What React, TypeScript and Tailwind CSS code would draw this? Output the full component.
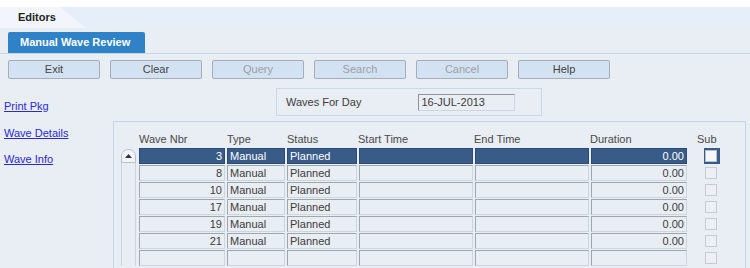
import React from 'react'

const ROWS = [
  { nbr: '3', type: 'Manual', status: 'Planned', dur: '0.00' },
  { nbr: '8', type: 'Manual', status: 'Planned', dur: '0.00' },
  { nbr: '10', type: 'Manual', status: 'Planned', dur: '0.00' },
  { nbr: '17', type: 'Manual', status: 'Planned', dur: '0.00' },
  { nbr: '19', type: 'Manual', status: 'Planned', dur: '0.00' },
  { nbr: '21', type: 'Manual', status: 'Planned', dur: '0.00' },
  { nbr: '', type: '', status: '', dur: '' },
]

const BUTTONS = [
  { label: 'Exit', off: false },
  { label: 'Clear', off: false },
  { label: 'Query', off: true },
  { label: 'Search', off: true },
  { label: 'Cancel', off: true },
  { label: 'Help', off: false },
]

function Cell({ w, sel, right, children }: { w: string; sel: boolean; right?: boolean; children?: React.ReactNode }) {
  return (
    <div
      className={`${w} h-[16px] flex items-center px-[2px] border leading-none ${right ? 'justify-end' : ''} ${
        sel
          ? 'bg-[#385b88] text-white border-[#2c4a72]'
          : 'bg-[#e9edf4] text-[#3c3c3c] border-t-[#9ea6b0] border-l-[#9ea6b0] border-b-[#cdd5df] border-r-[#cdd5df]'
      }`}
    >
      {children}
    </div>
  )
}

export default function App() {
  return (
    <div className="w-[750px] h-[268px] overflow-hidden bg-[#e9edf4] text-[11px]" style={{ fontFamily: '"Liberation Sans", Arial, sans-serif' }}>
      {/* top strip */}
      <div className="h-[7px] bg-white" />

      {/* editors tab bar */}
      <div className="h-[21px] bg-[#e5eef9] flex">
        <div className="relative w-[86px] h-full">
          <div className="absolute inset-0 bg-[#f2f6fc] [clip-path:polygon(0_0,60px_0,86px_100%,0_100%)]" />
          <span className="relative pl-[18px] leading-[21px] text-[11px] font-bold text-[#222]">Editors</span>
        </div>
      </div>

      {/* manual wave review tab */}
      <div className="pt-[4px] px-[8px] border-b border-[#c7d5e8]">
        <div className="w-[137px] h-[21px] bg-[#2f82c7] rounded-t-[2px] flex items-center pl-[12px] text-white font-bold text-[11px]">
          Manual Wave Review
        </div>
      </div>

      {/* button row */}
      <div className="flex gap-[10px] pl-[8px] pt-[6px]">
        {BUTTONS.map((b) => (
          <div
            key={b.label}
            className={`w-[92px] h-[19px] rounded-[2px] border border-[#a5adb6] bg-[#d3e2f2] flex items-center justify-center text-[11px] ${
              b.off ? 'text-[#9aa0a6]' : 'text-[#444]'
            }`}
          >
            {b.label}
          </div>
        ))}
      </div>

      <div className="flex">
        {/* left links */}
        <div className="w-[113px] flex flex-col pl-[4px] pt-[21px] text-[11px] text-[#2a2ad0] underline">
          <span className="leading-[13px]">Print Pkg</span>
          <span className="leading-[13px] mt-[14px]">Wave Details</span>
          <span className="leading-[13px] mt-[13px]">Wave Info</span>
        </div>

        <div className="flex-1 flex flex-col">
          {/* waves for day */}
          <div className="ml-[163px] mt-[9px] w-[266px] h-[28px] border border-[#ccd7e6] flex items-center">
            <span className="ml-[9px] text-[#3c3c3c]">Waves For Day</span>
            <div className="ml-[57px] w-[97px] h-[17px] border border-t-[#8d959f] border-l-[#8d959f] border-b-[#cdd5df] border-r-[#cdd5df] flex items-center px-[2px] text-[#3c3c3c]">
              16-JUL-2013
            </div>
          </div>

          {/* table panel */}
          <div className="mt-[5px] mr-[4px] border-l border-t border-r border-[#c5d3e6] h-[200px] pl-[7px] pt-[10px]">
            <div className="flex text-[#4a4a4a] h-[14px] leading-[14px]">
              <span className="ml-[18px] w-[88px]">Wave Nbr</span>
              <span className="w-[60px]">Type</span>
              <span className="w-[71px]">Status</span>
              <span className="w-[116px]">Start Time</span>
              <span className="w-[116px]">End Time</span>
              <span className="w-[107px]">Duration</span>
              <span>Sub</span>
            </div>
            <div className="flex mt-[2px]">
              {/* scrollbar */}
              <div className="w-[15px] flex flex-col">
                <div className="h-[14px] mt-[1px] rounded-t-[7px] border border-[#b8c2ce] bg-[#f1f4f8] flex items-center justify-center">
                  <svg width="7" height="4" viewBox="0 0 7 4"><path d="M0 4 L3.5 0 L7 4 Z" fill="#333" /></svg>
                </div>
                <div className="flex-1 border-l border-r border-[#cbd4df]" />
              </div>
              <div className="ml-[3px] flex flex-col gap-[1px]">
                {ROWS.map((r, i) => {
                  const sel = i === 0
                  return (
                    <div key={i} className="flex gap-[2px] items-center">
                      <Cell w="w-[86px]" sel={sel} right>{r.nbr}</Cell>
                      <Cell w="w-[58px]" sel={sel}>{r.type}</Cell>
                      <Cell w="w-[70px]" sel={sel}>{r.status}</Cell>
                      <Cell w="w-[114px]" sel={sel} />
                      <Cell w="w-[114px]" sel={sel} />
                      <Cell w="w-[96px]" sel={sel} right>{r.dur}</Cell>
                      <div className="ml-[15px] w-[16px] h-[16px] flex">
                        {sel ? (
                          <div className="w-[16px] h-[16px] bg-[#385b88] pl-[1px] pt-[2px]">
                            <div className="w-[12px] h-[12px] bg-[#f4f6f9] border border-[#b9bfc7]" />
                          </div>
                        ) : (
                          <div className="ml-[1px] mt-[2px] w-[12px] h-[12px] bg-[#eceff4] border border-[#c6cbd2]" />
                        )}
                      </div>
                    </div>
                  )
                })}
              </div>
            </div>
          </div>
        </div>
      </div>
    </div>
  )
}
